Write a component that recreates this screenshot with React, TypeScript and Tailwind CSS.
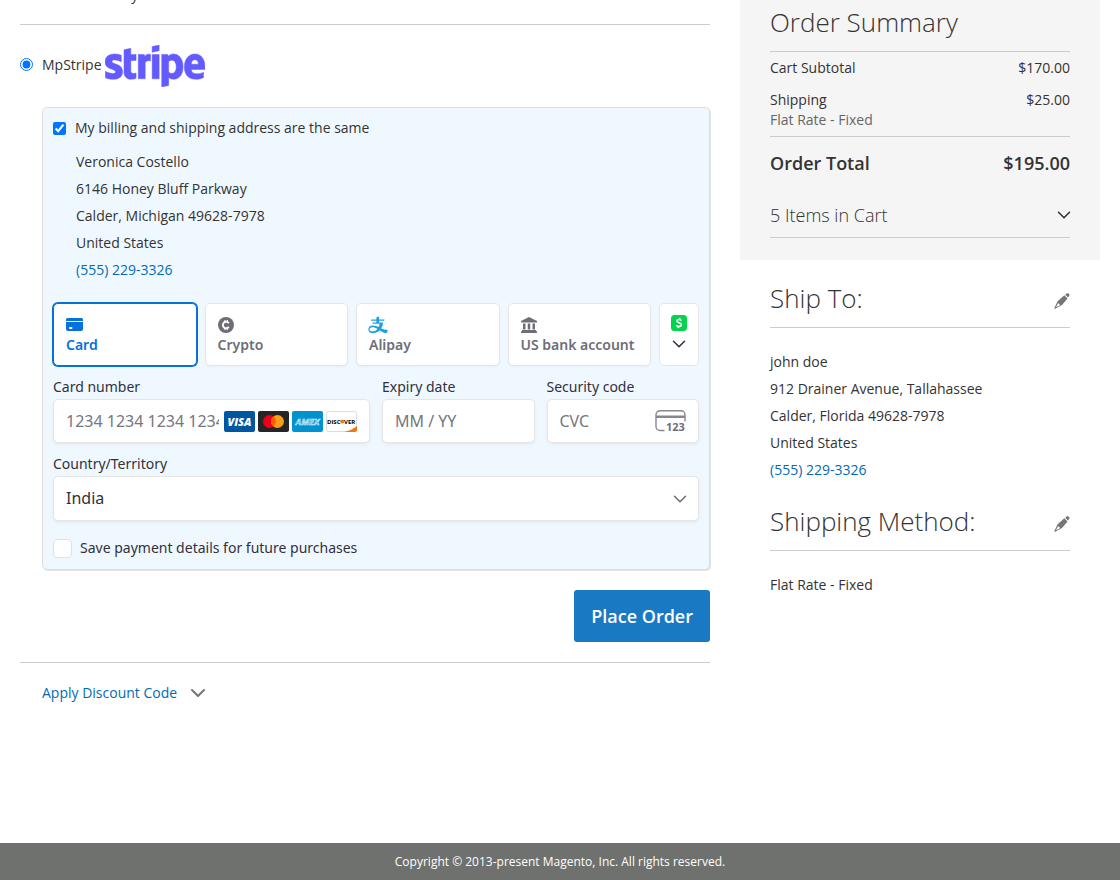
import { useState } from "react";
import type { ReactNode } from "react";
import { ChevronDown } from "lucide-react";
import { AiOutlineAlipay } from "react-icons/ai";
import { FaStripe } from "react-icons/fa";
import { clsx } from "clsx";

const billingAddress = ["Veronica Costello", "6146 Honey Bluff Parkway", "Calder, Michigan 49628-7978", "United States"];
const shippingAddress = ["john doe", "912 Drainer Avenue, Tallahassee", "Calder, Florida 49628-7978", "United States"];
const phone = "(555) 229-3326";

const field = "w-full rounded-[5px] border border-[#e6e6e6] bg-white shadow-[0_1px_2px_rgba(0,0,0,0.04),0_2px_5px_rgba(0,0,0,0.03)]";
const fieldLabel = "block text-[14px] leading-5 text-[#30313d]";

function CardIcon() {
  return (
    <svg className="h-4 w-[17px]" viewBox="0 0 17 16" fill="currentColor">
      <path d="M1.500 1h14a1.500 1.500 0 0 1 1.500 1.500V4H0V2.500A1.500 1.500 0 0 1 1.500 1z" />
      <path fillRule="evenodd" d="M0 5h17v7a2 2 0 0 1-2 2H2a2 2 0 0 1-2-2zM4 10a1 1 0 0 0 0 2h1.500a1 1 0 0 0 0-2z" />
    </svg>
  );
}

function CryptoIcon() {
  return (
    <svg className="size-4" viewBox="0 0 16 16">
      <circle cx="8" cy="8" r="8" fill="#6d6e78" />
      <path d="M10.800 6.300A3.200 3.200 0 1 0 10.800 9.700" fill="none" stroke="#fff" strokeWidth="1.900" />
      <path d="M7 3v2M9.300 3v2M7 11v2M9.300 11v2" stroke="#fff" strokeWidth="1.200" />
    </svg>
  );
}

function BankIcon() {
  return (
    <svg className="size-4" viewBox="0 0 16 16" fill="#6d6e78">
      <path d="M8 0 16 4v1.500H0V4zM2 6.500h2.500v6H2zM6.750 6.500h2.500v6h-2.500zM11.500 6.500H14v6h-2.500zM1 13h14v1.200h1V16H0v-1.800h1z" />
    </svg>
  );
}

function CashAppIcon() {
  return (
    <svg className="size-4" viewBox="0 0 16 16">
      <rect width="16" height="16" rx="3.500" fill="#00d54b" />
      <path d="M10.500 5.500C9.900 4.900 9 4.500 8.100 4.500 7 4.500 6 5 6 6c0 2.200 4.400 1.200 4.400 3.600 0 1.200-1.100 1.900-2.400 1.900-1.100 0-2-.4-2.700-1.100" fill="none" stroke="#fff" strokeWidth="1.600" />
      <path d="M8.800 2.800 8.500 4.500M7.500 11.500l-.3 1.700" stroke="#fff" strokeWidth="1.600" />
    </svg>
  );
}

function PencilIcon() {
  return (
    <svg className="size-4" viewBox="0 0 16 16" fill="#757575">
      <path d="M11.200 1.700 12.600.6c.8-.6 1.600-.5 2.300.2.700.7.800 1.500.2 2.300L14 4.600z" />
      <path fillRule="evenodd" d="M10.300 2.300 13.500 5.400 8 12.100 1.200 15.700c-.6.300-1-.2-.8-.8L3.400 8.600zM4 10.200l-1.700 3.300.5.500 3.100-1.800c-.1-1-.8-1.800-1.900-2z" />
    </svg>
  );
}

function CvcIcon() {
  return (
    <svg className="h-[22px] w-[31px]" viewBox="0 0 31 22">
      <path d="M9.500 20.500H5a4 4 0 0 1-4-4V4.700a4 4 0 0 1 4-4h21a4 4 0 0 1 4 4V11.500" fill="none" stroke="#86878f" strokeWidth="1.400" />
      <path d="M1 5.500h29v2.500H1z" fill="#86878f" />
      <text x="11" y="21" className="font-['Open_Sans',sans-serif] text-[11px] leading-none font-bold" fill="#6d6e78">123</text>
    </svg>
  );
}

function VisaLogo() {
  return (
    <svg className="h-[21px] w-[31px]" viewBox="0 0 31 21">
      <rect width="31" height="21" rx="2" fill="#00579f" />
      <text x="15.500" y="14.500" textAnchor="middle" className="font-['Open_Sans',sans-serif] text-[11px] font-extrabold italic" fill="#fff">VISA</text>
    </svg>
  );
}

function MastercardLogo() {
  return (
    <svg className="h-[21px] w-[31px]" viewBox="0 0 31 21">
      <rect width="31" height="21" rx="2" fill="#252525" />
      <circle cx="11.500" cy="10.500" r="6.500" fill="#eb001b" />
      <circle cx="19.500" cy="10.500" r="6.500" fill="#f79e1b" />
      <path d="M15.500 5.400a6.500 6.500 0 0 1 0 10.200 6.500 6.500 0 0 1 0-10.200z" fill="#ff5f00" />
    </svg>
  );
}

function AmexLogo() {
  return (
    <svg className="h-[21px] w-[31px]" viewBox="0 0 31 21">
      <rect width="31" height="21" rx="2" fill="#0193ce" />
      <text x="15.500" y="13.500" textAnchor="middle" className="font-['Open_Sans',sans-serif] text-[9px] font-bold italic" fill="#3fb0dc" stroke="#e4f5fb" strokeWidth="0.500">AMEX</text>
    </svg>
  );
}

function DiscoverLogo() {
  return (
    <svg className="h-[21px] w-[31px]" viewBox="0 0 31 21">
      <rect x=".5" y=".5" width="30" height="20" rx="2" fill="#fff" stroke="#dcdce0" />
      <path d="M31 15v4a2 2 0 0 1-2 2H18c5-1 9-3 13-6z" fill="#f27712" />
      <g className="font-['Open_Sans',sans-serif] text-[6px] font-bold" fill="#000">
        <text x="14.500" y="12.600" textAnchor="end">DISC</text>
        <text x="18" y="12.600">VER</text>
      </g>
      <circle cx="16.300" cy="10.500" r="2" fill="#f27712" />
    </svg>
  );
}

const methods: { id: string; label: string; icon: ReactNode }[] = [
  { id: "card", label: "Card", icon: <CardIcon /> },
  { id: "crypto", label: "Crypto", icon: <CryptoIcon /> },
  { id: "alipay", label: "Alipay", icon: <AiOutlineAlipay className="-ml-0.5 size-[22px] text-[#1c9fe5]" /> },
  { id: "bank", label: "US bank account", icon: <BankIcon /> },
];

function Address({ lines }: { lines: string[] }) {
  return (
    <address className="leading-[27px] not-italic">
      {lines.map((line) => (
        <p key={line}>{line}</p>
      ))}
      <a href="tel:5552293326" className="text-[#006bb4]">{phone}</a>
    </address>
  );
}

function PaymentForm() {
  const [method, setMethod] = useState("card");

  return (
    <div className="font-['Noto_Sans',sans-serif]">
      <div className="flex gap-2">
        {methods.map(({ id, label, icon }) => (
          <button
            key={id}
            type="button"
            onClick={() => setMethod(id)}
            className={clsx(
              "h-[63px] flex-1 rounded-[5px] border bg-white px-3 text-left text-[14px] leading-5 font-semibold whitespace-nowrap",
              method === id
                ? "border-[#0570de] text-[#0570de] shadow-[0_0_0_1px_#0570de]"
                : "border-[#e6e6e6] text-[#6d6e78] shadow-[0_1px_2px_rgba(0,0,0,0.04)]"
            )}
          >
            <span className="flex h-5 items-center">{icon}</span>
            {label}
          </button>
        ))}
        <button type="button" aria-label="More payment methods" className="flex h-[63px] w-10 flex-col items-center justify-center gap-0.5 rounded-[5px] border border-[#e6e6e6] bg-white text-[#30313d]">
          <CashAppIcon />
          <ChevronDown className="size-[22px]" strokeWidth={1.7} />
        </button>
      </div>

      <div className="mt-[11px] grid grid-cols-4 gap-3">
        <div className="col-span-2">
          <label htmlFor="card-number" className={fieldLabel}>Card number</label>
          <div className={clsx(field, "mt-0.5 flex h-11 items-center gap-[3px] px-3")}>
            <input id="card-number" placeholder="1234 1234 1234 1234" className="mr-0.5 min-w-0 flex-1 text-base outline-none placeholder:text-[#757680]" />
            <VisaLogo />
            <MastercardLogo />
            <AmexLogo />
            <DiscoverLogo />
          </div>
        </div>
        <div>
          <label htmlFor="expiry" className={fieldLabel}>Expiry date</label>
          <input id="expiry" placeholder="MM / YY" className={clsx(field, "mt-0.5 h-11 px-3 text-base outline-none placeholder:text-[#757680]")} />
        </div>
        <div>
          <label htmlFor="cvc" className={fieldLabel}>Security code</label>
          <div className={clsx(field, "mt-0.5 flex h-11 items-center px-3")}>
            <input id="cvc" placeholder="CVC" className="min-w-0 flex-1 text-base outline-none placeholder:text-[#757680]" />
            <CvcIcon />
          </div>
        </div>
      </div>

      <label htmlFor="country" className={clsx(fieldLabel, "mt-[11px]")}>Country/Territory</label>
      <div className="mt-0.5 grid items-center">
        <select id="country" defaultValue="India" className={clsx(field, "col-start-1 row-start-1 h-[45px] appearance-none px-3 pb-0.5 text-base text-[#30313d]")}>
          <option>India</option>
          <option>United States</option>
        </select>
        <ChevronDown className="pointer-events-none col-start-1 row-start-1 mr-2 size-[22px] justify-self-end text-[#6d6e78]" strokeWidth={1.7} />
      </div>

      <label className="mt-[17px] mb-px flex items-center gap-2 text-[14px] leading-5 text-[#30313d]">
        <input type="checkbox" className="size-[19px] appearance-none rounded border border-[#e0e0e6] bg-white checked:bg-[#0570de]" />
        Save payment details for future purchases
      </label>
    </div>
  );
}

function SidebarHeading({ children }: { children: string }) {
  return (
    <div className="flex items-center justify-between border-b border-[#cccccc] pb-[11px]">
      <h2 className="text-[26px] leading-9 font-light">{children}</h2>
      <button type="button" aria-label={`Edit ${children}`} className="pt-1.5">
        <PencilIcon />
      </button>
    </div>
  );
}

function Sidebar() {
  return (
    <aside className="w-1/3 shrink-0">
      <section className="bg-[#f5f5f5] px-[30px] pt-1 pb-[22px]">
        <h2 className="border-b border-[#cccccc] pb-[11px] text-[26px] leading-9 font-light">Order Summary</h2>
        <table className="w-full">
          <tbody>
            <tr>
              <th scope="row" className="pt-1.5 text-left font-normal">Cart Subtotal</th>
              <td className="pt-1.5 text-right">$170.00</td>
            </tr>
            <tr className="border-b border-[#cccccc] align-top">
              <th scope="row" className="pt-3 pb-1.5 text-left font-normal">
                Shipping
                <span className="block text-[#666666]">Flat Rate - Fixed</span>
              </th>
              <td className="pt-3 text-right">$25.00</td>
            </tr>
            <tr className="text-lg font-semibold">
              <th scope="row" className="pt-3 text-left font-semibold">Order Total</th>
              <td className="pt-3 text-right">$195.00</td>
            </tr>
          </tbody>
        </table>
        <button type="button" className="mt-6 flex w-full items-center justify-between border-b border-[#cccccc] pb-2 text-lg font-light">
          5 Items in Cart
          <ChevronDown className="-mr-[5px] size-[22px]" strokeWidth={1.7} />
        </button>
      </section>

      <section className="px-[30px] pt-5">
        <SidebarHeading>Ship To:</SidebarHeading>
        <div className="pt-5">
          <Address lines={shippingAddress} />
        </div>
      </section>

      <section className="px-[30px] pt-5">
        <SidebarHeading>Shipping Method:</SidebarHeading>
        <p className="pt-5 leading-[27px]">Flat Rate - Fixed</p>
      </section>
    </aside>
  );
}

export default function App() {
  return (
    <div className="flex min-h-screen flex-col bg-white font-['Open_Sans',sans-serif] text-[14px] leading-5 text-[#333333]">
      <div className="flex px-5">
        <main className="min-w-0 flex-1 pr-[30px]">
          <div className="flex h-[5px] items-end overflow-hidden pl-[22px]">Check / Money order</div>

          <section className="mt-[19px] border-y border-[#cccccc] pt-5 pb-5">
            <label className="flex items-center">
              <input type="radio" name="payment" defaultChecked className="mr-[9px] mb-1 size-[13px] accent-[#0075ff]" />
              <span className="pb-0.5">MpStripe</span>
              <FaStripe viewBox="0 124 640 264" className="ml-[3px] h-[42px] w-[100px] stroke-[#635bff] stroke-[3] text-[#635bff]" preserveAspectRatio="none" />
            </label>

            <div className="mt-5 ml-[22px] rounded-[5px] border border-[#dddddd] bg-[#f0f8ff] p-2.5 shadow-[1px_1px_0_#e2e4e4]">
              <label className="flex items-center gap-[9px]">
                <input type="checkbox" defaultChecked className="size-[13px] accent-[#0075ff]" />
                My billing and shipping address are the same
              </label>
              <div className="mt-2.5 mb-5 pl-[23px]">
                <Address lines={billingAddress} />
              </div>
              <PaymentForm />
            </div>

            <div className="mt-5 flex justify-end">
              <button type="button" className="h-[52px] rounded-[3px] bg-[#1979c3] px-[17px] text-lg font-semibold text-white">
                Place Order
              </button>
            </div>
          </section>

          <button type="button" className="mt-[18px] ml-[22px] flex items-center gap-[9px] text-[#006bb4]">
            Apply Discount Code
            <ChevronDown className="size-6 text-[#757575]" strokeWidth={2} />
          </button>
        </main>
        <Sidebar />
      </div>

      <footer className="mt-auto bg-[#6e716e] py-[9px] text-center text-xs leading-[19px] text-white">
        Copyright © 2013-present Magento, Inc. All rights reserved.
      </footer>
    </div>
  );
}
